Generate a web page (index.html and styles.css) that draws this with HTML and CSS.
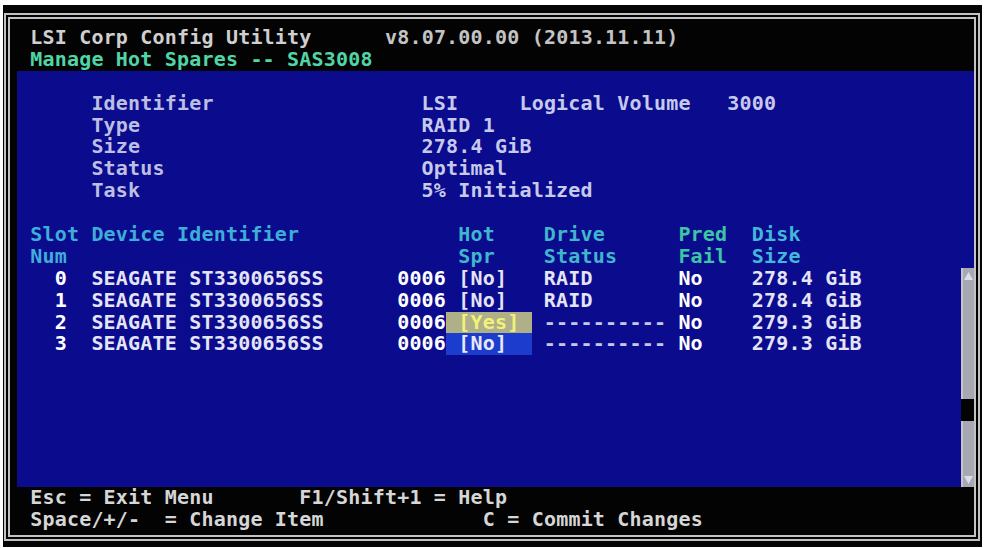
FILE: index.html
```html
<!DOCTYPE html>
<html lang="en">
<head>
<meta charset="utf-8">
<title>LSI Corp Config Utility - Manage Hot Spares</title>
<link rel="stylesheet" href="styles.css">
</head>
<body>
<div class="monitor">
  <div class="bezel">
    <div class="screen">
      <header class="title-bar">
        <div class="line"> <span class="t-title">LSI Corp Config Utility</span>      <span class="t-version">v8.07.00.00 (2013.11.11)</span></div>
        <div class="line"> <span class="t-menu">Manage Hot Spares -- SAS3008</span></div>
      </header>

      <main class="panel">
        <div class="panel-body">
          <section class="volume">
            <div class="line info"><span class="label">Identifier</span><span class="value">LSI     Logical Volume   3000</span></div>
            <div class="line info"><span class="label">Type</span><span class="value">RAID 1</span></div>
            <div class="line info"><span class="label">Size</span><span class="value">278.4 GiB</span></div>
            <div class="line info"><span class="label">Status</span><span class="value">Optimal</span></div>
            <div class="line info"><span class="label">Task</span><span class="value">5% Initialized</span></div>
          </section>

          <section class="disks">
            <div class="line trow head"><span class="h-slot"> Slot</span><span class="h-dev">Device Identifier</span><span class="h-hot"> Hot</span><span class="h-drv"> Drive</span><span class="h-pred"> Pred</span><span class="h-size"> Disk</span></div>
            <div class="line trow head"><span class="h-slot"> Num</span><span class="h-dev"></span><span class="h-hot"> Spr</span><span class="h-drv"> Status</span><span class="h-pred"> Fail</span><span class="h-size"> Size</span></div>
            <div class="line trow"><span class="slot">   0</span><span class="dev">SEAGATE ST3300656SS      <b>0006</b></span><span class="spr"> [No]</span><span class="drv"> RAID</span><span class="pred"> No</span><span class="size"> 278.4 GiB</span></div>
            <div class="line trow"><span class="slot">   1</span><span class="dev">SEAGATE ST3300656SS      <b>0006</b></span><span class="spr"> [No]</span><span class="drv"> RAID</span><span class="pred"> No</span><span class="size"> 278.4 GiB</span></div>
            <div class="line trow"><span class="slot">   2</span><span class="dev">SEAGATE ST3300656SS      <b>0006</b></span><span class="spr sel-yes"> [Yes] </span><span class="drv dim"> ----------</span><span class="pred"> No</span><span class="size"> 279.3 GiB</span></div>
            <div class="line trow"><span class="slot">   3</span><span class="dev">SEAGATE ST3300656SS      <b>0006</b></span><span class="spr sel-no"> [No]  </span><span class="drv dim"> ----------</span><span class="pred"> No</span><span class="size"> 279.3 GiB</span></div>
          </section>
        </div>

        <div class="scrollbar">
          <div class="sb-track sb-upper">
            <svg class="sb-arrow" width="9" height="8" viewBox="0 0 9 8"><polygon points="4.5,0 9,8 0,8"/></svg>
          </div>
          <div class="sb-gap"></div>
          <div class="sb-track sb-lower">
            <svg class="sb-arrow" width="9" height="8" viewBox="0 0 9 8"><polygon points="0,0 9,0 4.5,8"/></svg>
          </div>
        </div>
      </main>

      <footer class="key-bar">
        <div class="line"> Esc = Exit Menu       F1/Shift+1 = Help</div>
        <div class="line"> Space/+/-  = Change Item             C = Commit Changes</div>
      </footer>
    </div>
  </div>
</div>
</body>
</html>
```

FILE: styles.css
```css
:root {
  --cw: 12.23px;   /* one text-mode character cell */
  --row: 21.9px;   /* one text-mode row */
  --blue: #0b0b8e;
}

* { box-sizing: border-box; }

html, body {
  margin: 0;
  background: #ffffff;
}

body {
  width: 987px;
  height: 548px;
  overflow: hidden;
}

/* outer black casing with a double grey rule around the screen */
.monitor {
  margin: 5px 0 0 3px;
  width: 979px;
  height: 542px;
  padding: 8px 2px 6px 1px;
  background: #050505;
}

.bezel {
  height: 100%;
  border: 6px double #c2c2c2;
  background: #030303;
}

.screen {
  height: 100%;
  display: flex;
  flex-direction: column;
  padding: 8px 0 0 7px;
  font-family: "DejaVu Sans Mono", "Liberation Mono", monospace;
  font-weight: 700;
  font-size: 20px;
  letter-spacing: 0.19px;
  line-height: var(--row);
  color: #d0d0d0;
}

.line {
  height: var(--row);
  padding-left: 1px;
  white-space: pre;
}

/* title rows */
.t-title { color: #cfcfcf; }
.t-version { color: #c4c4c4; }
.t-menu { color: #4fd6a6; }

/* blue work area */
.panel {
  height: calc(var(--row) * 19);
  flex: none;
  display: flex;
  background: var(--blue);
}

.panel-body {
  flex: 1;
  padding-top: var(--row);
}

.info {
  padding-left: calc(var(--cw) * 6 + 1px);
  color: #bcbfe2;
}

.info .label {
  display: inline-block;
  width: calc(var(--cw) * 27);
}

.info .value { color: #c6c9ea; }

.disks { margin-top: var(--row); }

.trow {
  display: grid;
  grid-template-columns:
    calc(var(--cw) * 6)
    calc(var(--cw) * 29)
    calc(var(--cw) * 7)
    calc(var(--cw) * 11)
    calc(var(--cw) * 6)
    1fr;
  color: #e4e4f4;
}

.head .h-slot,
.head .h-dev { color: #3eaed8; }
.head .h-hot,
.head .h-drv { color: #40b6cc; }
.head .h-pred { color: #3cc6a6; }
.head .h-size { color: #42b8d8; }

.slot { color: #ffffff; }
.dev b { color: #ffffff; font-weight: 700; }
.pred { color: #ffffff; }
.dim { color: #c4c6e6; }

.sel-yes {
  background: #b0b088;
  color: #f2f27a;
}

.sel-no {
  background: #1b3ccc;
  color: #e8e8fa;
}

/* scroll bar on the right edge of the list */
.scrollbar {
  width: 13px;
  margin-top: calc(var(--row) * 9);
  display: flex;
  flex-direction: column;
}

.sb-track {
  display: flex;
  justify-content: center;
  background: #a8a8b2;
  border-left: 2px solid #c4c4ce;
}

.sb-upper {
  height: calc(var(--row) * 6);
  align-items: flex-start;
  padding-top: 4px;
}

.sb-gap {
  height: var(--row);
  background: #040404;
}

.sb-lower {
  flex: 1;
  align-items: flex-end;
  padding-bottom: 3px;
}

.sb-arrow { fill: #dcdcec; }

/* key help rows */
.key-bar { color: #d6d6d6; }
```
